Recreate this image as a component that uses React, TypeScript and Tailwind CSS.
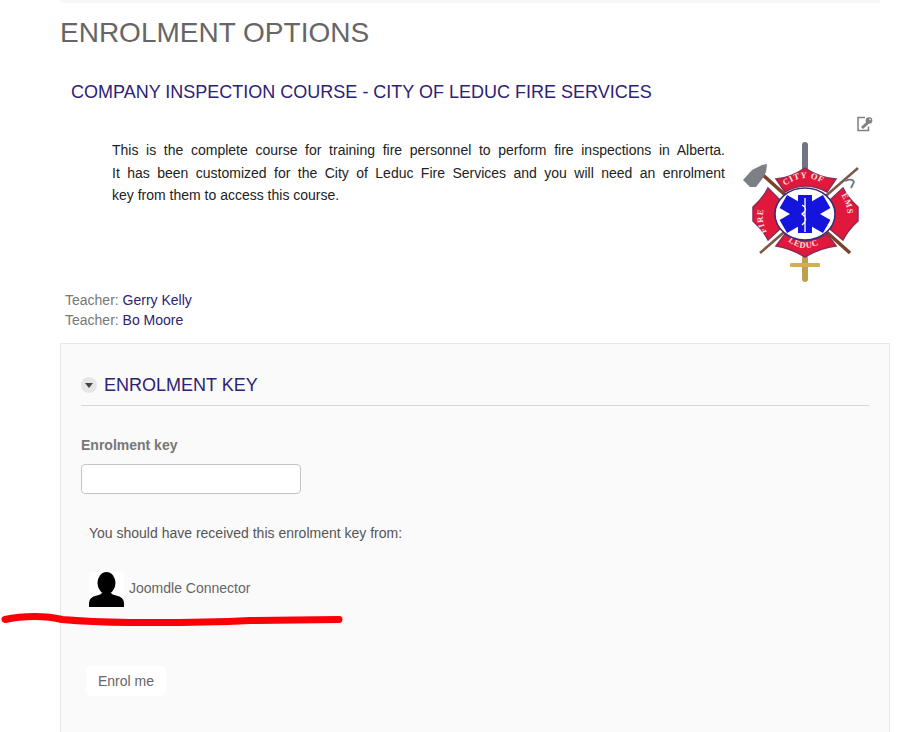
import React from 'react';

const serifText = {
  fill: '#f6e3e3',
  fontSize: 8.5,
  fontWeight: 700,
  fontFamily: "'Liberation Serif', serif",
  letterSpacing: 0.8,
};

// drawn in page coordinates, so the viewBox starts at the logo's corner
const FireLogo: React.FC = () => (
  <svg viewBox="740 140 122 144" className="w-[122px] h-[144px]">
    <defs>
      <path id="arcTop" d="M785 186 Q805 170 827 186" />
      <path id="arcBottom" d="M788 241 Q805 255 824 241" />
      <path id="arcLeft" d="M767 232 Q757 213 771 194" />
      <path id="arcRight" d="M841 195 Q853 213 843 232" />
    </defs>
    <rect x="802" y="142" width="6" height="30" rx="3" fill="#6f7585" />
    <rect x="802" y="255" width="6" height="27" rx="3" fill="#c0a050" />
    <rect x="790" y="263" width="30" height="4" rx="1" fill="#d0b050" />
    {/* axe and pike */}
    <path d="M763 175 L850 253" stroke="#7a4228" strokeWidth="3.5" />
    <path d="M858 168 L760 253" stroke="#7a5a48" strokeWidth="2.5" />
    <path d="M743 180 L752 170 L762 165 L767 164 L766 172 L763 178 L756 187 L750 187 Z" fill="#7d7f86" />
    <path d="M845 181 Q853 178 854 182 L851 188" stroke="#6f7585" strokeWidth="1.8" fill="none" />
    {/* maltese cross */}
    <path d="M776 179 Q790 178 805 168 Q820 178 836 179 L827 192 Q805 180 785 192 Z" fill="#e0193c" stroke="#8d2a55" strokeWidth="1.5" />
    <path d="M776 246 Q790 248 805 257 Q820 248 836 246 L827 234 Q805 247 785 234 Z" fill="#e0193c" stroke="#8d2a55" strokeWidth="1.5" />
    <path d="M753 207 Q763 198 768 188 L780 200 Q770 214 780 229 L768 240 Q763 230 753 221 Z" fill="#e0193c" stroke="#8d2a55" strokeWidth="1.5" />
    <path d="M858 207 Q848 198 843 188 L830 200 Q840 214 830 229 L843 240 Q848 230 858 221 Z" fill="#e0193c" stroke="#8d2a55" strokeWidth="1.5" />
    <text {...serifText}>
      <textPath href="#arcTop">CITY OF</textPath>
    </text>
    <text {...serifText}>
      <textPath href="#arcBottom">LEDUC</textPath>
    </text>
    <text {...serifText}>
      <textPath href="#arcLeft">FIRE</textPath>
    </text>
    <text {...serifText}>
      <textPath href="#arcRight">EMS</textPath>
    </text>
    {/* star of life */}
    <ellipse cx="805" cy="214" rx="30" ry="26" fill="#ffffff" stroke="#3a2a7a" strokeWidth="1.5" />
    <g fill="#1414dc">
      <rect x="798" y="195" width="14" height="38" />
      <rect x="797.5" y="189" width="15" height="50" transform="rotate(60 805 214)" />
      <rect x="797.5" y="189" width="15" height="50" transform="rotate(120 805 214)" />
    </g>
    <path d="M805 198 V232 M802 205 Q809 209 802 214 Q809 219 802 225" stroke="#ffffff" strokeWidth="1.3" fill="none" />
  </svg>
);

const UserAvatar: React.FC = () => (
  <svg viewBox="0 0 35 35" className="w-[35px] h-[35px] bg-white shrink-0">
    <ellipse cx="17.5" cy="11" rx="9" ry="11" fill="#000" />
    <path d="M0 35 V31 Q0 25 8 23.5 Q12 22.5 13 21 H22 Q23 22.5 27 23.5 Q35 25 35 31 V35 Z" fill="#000" />
  </svg>
);

export default function App() {
  return (
    <div className="relative w-[920px] h-[732px] overflow-hidden bg-white font-['Liberation_Sans',Arial,sans-serif]">
      <div className="ml-[60px] mr-[30px]">
        <div className="h-[3px] w-[820px] bg-[#f7f7f7]" />
        <h1 className="mt-[13px] text-[28px] leading-[34px] text-[#666666]">ENROLMENT OPTIONS</h1>

        <h3 className="mt-[30px] ml-[11px] text-[18px] leading-[24px] text-[#2d2273]">
          COMPANY INSPECTION COURSE - CITY OF LEDUC FIRE SERVICES
        </h3>

        <div className="flex justify-end pr-[17px] mt-[12px] h-[18px]">
          <svg viewBox="0 0 16 16" className="w-[16px] h-[16px]" fill="none">
            <path d="M8 1.5 H1 V14.5 H11.5 V10.5" stroke="#808080" strokeWidth="1.5" />
            <path d="M5 12 L11 6.5" stroke="#808080" strokeWidth="3" />
            <circle cx="12" cy="4.5" r="3.3" fill="#808080" />
            <circle cx="13" cy="3.6" r="0.8" fill="#ffffff" />
          </svg>
        </div>

        <div className="flex mt-[1px] h-[149px]">
          <div className="mt-[4px] ml-[52px] w-[613px] text-[14px] leading-[22.6px] text-[#222222]">
            <p className="text-justify [text-align-last:justify]">
              This is the complete course for training fire personnel to perform fire inspections in Alberta.
            </p>
            <p className="text-justify [text-align-last:justify]">
              It has been customized for the City of Leduc Fire Services and you will need an enrolment
            </p>
            <p>key from them to access this course.</p>
          </div>
          <div className="ml-[15px] mt-[5px]">
            <FireLogo />
          </div>
        </div>

        <div className="mt-[6px] ml-[5px] text-[14px] leading-[20px] text-[#777777]">
          <div>
            Teacher: <a className="text-[#2d2273]">Gerry Kelly</a>
          </div>
          <div>
            Teacher: <a className="text-[#2d2273]">Bo Moore</a>
          </div>
        </div>

        <div className="mt-[13px] h-[400px] bg-[#fafafa] border border-[#e8e8e8] px-[20px]">
          <div className="flex items-center h-[62px] pt-[21px] border-b border-[#d8d8d8]">
            <span className="flex items-center justify-center w-[16px] h-[16px] rounded-full bg-[#e6e6e6]">
              <span className="w-0 h-0 border-x-[4px] border-x-transparent border-t-[5px] border-t-[#444444]" />
            </span>
            <span className="ml-[7px] text-[18px] text-[#2d2273]">ENROLMENT KEY</span>
          </div>

          <div className="mt-[29px] text-[14px] leading-[20px] font-bold text-[#777777]">Enrolment key</div>
          <input className="block mt-[9px] w-[220px] h-[30px] bg-white border border-[#c4c4c4] rounded-[4px]" />

          <p className="mt-[29px] ml-[8px] text-[14px] leading-[20px] text-[#555555]">
            You should have received this enrolment key from:
          </p>

          <div className="flex mt-[29px] ml-[8px] h-[35px]">
            <UserAvatar />
            <span className="ml-[5px] mt-[6px] text-[14px] leading-[20px] text-[#666666]">Joomdle Connector</span>
          </div>

          <button className="block mt-[59px] ml-[5px] h-[30px] px-[12px] bg-white rounded-[5px] text-[14px] text-[#666666]">
            Enrol me
          </button>
        </div>
      </div>

      {/* red marker stroke drawn over the page */}
      <svg viewBox="0 0 920 732" className="absolute inset-0 w-[920px] h-[732px] pointer-events-none" fill="none">
        <path
          d="M5 619.5 Q18 616.5 35 616.5 Q50 616.5 62 619.5 Q90 622 130 622.5 Q200 623 250 620.5 L339 619.5"
          stroke="#fb0007"
          strokeWidth="7"
          strokeLinecap="round"
        />
      </svg>
    </div>
  );
}
